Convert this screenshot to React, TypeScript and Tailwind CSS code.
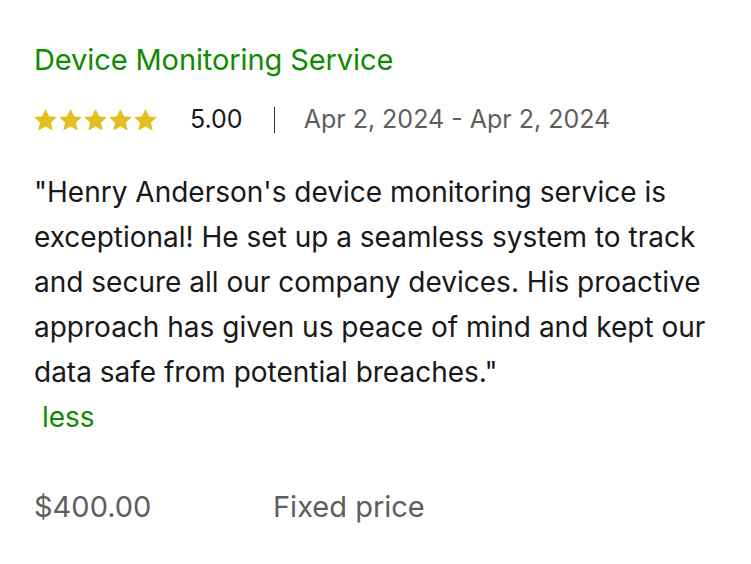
import React from 'react'

function Star() {
  return (
    <svg viewBox="0 0 24 24" className="w-[25px] h-[25px]" fill="#e2bf21">
      <path
        strokeLinejoin="round"
        stroke="#e2bf21"
        strokeWidth="1.2"
        d="M12 2.2l2.9 6.3 6.9.7-5.2 4.6 1.5 6.8L12 17.1l-6.1 3.5 1.5-6.8-5.2-4.6 6.9-.7z"
      />
    </svg>
  )
}

export default function App() {
  return (
    <main className="min-h-screen bg-white" style={{ fontFamily: 'Inter, "Liberation Sans", sans-serif' }}>
      <div className="pl-[34px] pr-[20px] pt-[40px]">
        <h2 className="text-[29px] leading-[40px] text-[#108a00] tracking-[-0.1px]">
          Device Monitoring Service
        </h2>

        <div className="flex items-center mt-[26px] h-[28px]">
          <div className="flex -ml-[1px]">
            <Star />
            <Star />
            <Star />
            <Star />
            <Star />
          </div>
          <span className="ml-[32px] text-[25px] text-[#181818]">5.00</span>
          <span className="ml-[31px] w-px h-[26px] bg-[#333]" />
          <span className="ml-[29px] text-[25px] text-[#5e5e5e]">Apr 2, 2024 - Apr 2, 2024</span>
        </div>

        <p className="mt-[36px] text-[28px] leading-[45px] text-[#181818] max-w-[690px]">
          "Henry Anderson's device monitoring service is exceptional! He set up a seamless system to track and secure all
          our company devices. His proactive approach has given us peace of mind and kept our data safe from potential
          breaches."
          <br />
          <span className="text-[#108a00]">{'\u00a0'}less</span>
        </p>

        <div className="flex items-center mt-[45px] text-[29px] text-[#5e5e5e]">
          <span className="w-[239px]">$400.00</span>
          <span>Fixed price</span>
        </div>
      </div>
    </main>
  )
}
